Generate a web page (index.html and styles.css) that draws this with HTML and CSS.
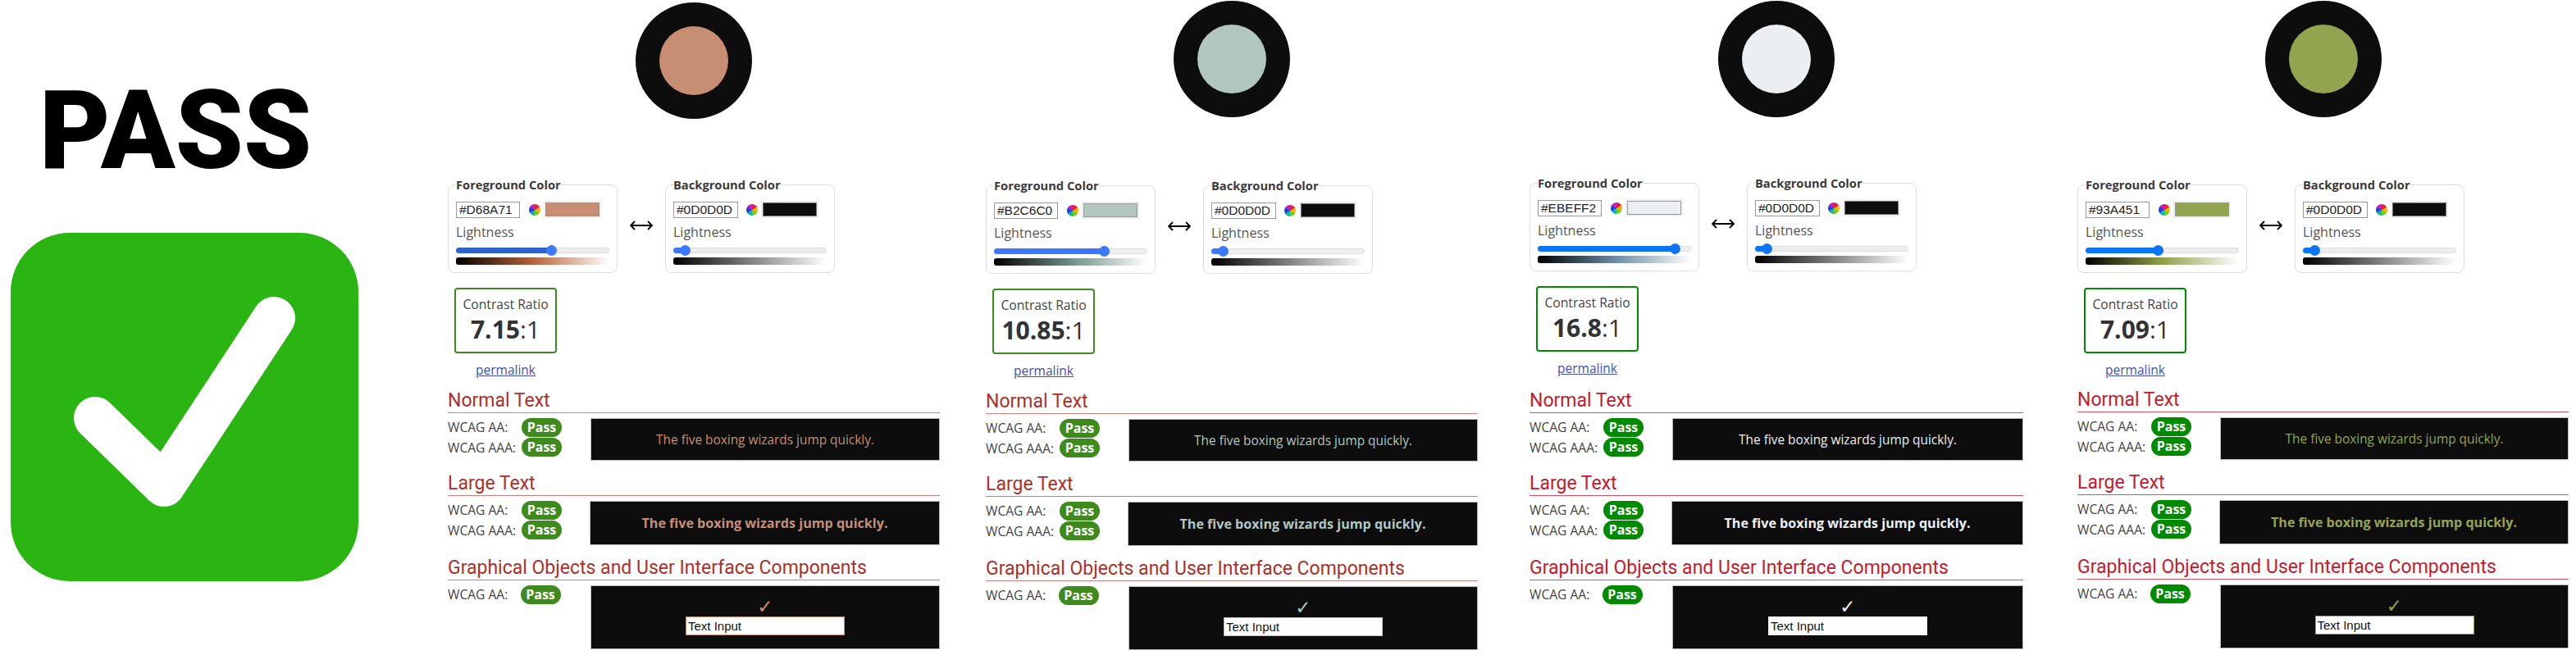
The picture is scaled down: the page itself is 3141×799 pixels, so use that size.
FILE: index.html
```html
<!DOCTYPE html>
<html lang="en">
<head>
    <meta charset="UTF-8">
    <title>Contrast checks</title>
    <link rel="stylesheet" href="styles.css">
</head>
<body>
    <aside class="verdict">
        <div class="verdict-word">PASS</div>
        <svg class="verdict-icon" viewBox="0 0 424 425" aria-hidden="true">
            <rect width="424" height="425" rx="72" fill="#2ab513"/>
            <path d="M103 226 L187 308 L321 104" fill="none" stroke="#fff" stroke-width="52" stroke-linecap="round" stroke-linejoin="round"/>
        </svg>
    </aside>

    <section class="sample sample-copper">
        <div class="disc"><div class="disc-inner"></div></div>
        <div class="controls">
            <fieldset class="picker picker-fg">
                <legend>Foreground Color</legend>
                <div class="picker-row">
                    <input class="hex" type="text" value="#D68A71">
                    <span class="wheel"></span>
                    <span class="swatch"><span class="swatch-fill"></span></span>
                </div>
                <div class="picker-label">Lightness</div>
                <div class="slider"><div class="slider-fill" style="width:63%"></div></div>
                <div class="ramp"></div>
            </fieldset>
            <svg class="swap" viewBox="0 0 28 12" aria-hidden="true"><path d="M1 6 H27 M6 1 L1 6 L6 11 M22 1 L27 6 L22 11"/></svg>
            <fieldset class="picker picker-bg">
                <legend>Background Color</legend>
                <div class="picker-row">
                    <input class="hex" type="text" value="#0D0D0D">
                    <span class="wheel"></span>
                    <span class="swatch"><span class="swatch-fill"></span></span>
                </div>
                <div class="picker-label">Lightness</div>
                <div class="slider"><div class="slider-fill" style="width:8%"></div></div>
                <div class="ramp"></div>
            </fieldset>
        </div>
        <div class="ratio">
            <div class="ratio-box">
                <div class="ratio-label">Contrast Ratio</div>
                <div class="ratio-value"><b>7.15</b>:1</div>
            </div>
            <a class="permalink" href="#">permalink</a>
        </div>
        <h3>Normal Text</h3>
        <div class="result">
            <div class="checks">
                <div class="check"><span>WCAG AA:</span><span class="pill">Pass</span></div>
                <div class="check"><span>WCAG AAA:</span><span class="pill">Pass</span></div>
            </div>
            <div class="preview preview-normal">The five boxing wizards jump quickly.</div>
        </div>
        <h3>Large Text</h3>
        <div class="result">
            <div class="checks">
                <div class="check"><span>WCAG AA:</span><span class="pill">Pass</span></div>
                <div class="check"><span>WCAG AAA:</span><span class="pill">Pass</span></div>
            </div>
            <div class="preview preview-large">The five boxing wizards jump quickly.</div>
        </div>
        <h3>Graphical Objects and User Interface Components</h3>
        <div class="result">
            <div class="checks">
                <div class="check check-ui"><span>WCAG AA:</span><span class="pill">Pass</span></div>
            </div>
            <div class="preview preview-ui">
                <span class="tick">✓</span>
                <input class="demo-input" type="text" value="Text Input">
            </div>
        </div>
    </section>

    <section class="sample sample-sage">
        <div class="disc"><div class="disc-inner"></div></div>
        <div class="controls">
            <fieldset class="picker picker-fg">
                <legend>Foreground Color</legend>
                <div class="picker-row">
                    <input class="hex" type="text" value="#B2C6C0">
                    <span class="wheel"></span>
                    <span class="swatch"><span class="swatch-fill"></span></span>
                </div>
                <div class="picker-label">Lightness</div>
                <div class="slider"><div class="slider-fill" style="width:73%"></div></div>
                <div class="ramp"></div>
            </fieldset>
            <svg class="swap" viewBox="0 0 28 12" aria-hidden="true"><path d="M1 6 H27 M6 1 L1 6 L6 11 M22 1 L27 6 L22 11"/></svg>
            <fieldset class="picker picker-bg">
                <legend>Background Color</legend>
                <div class="picker-row">
                    <input class="hex" type="text" value="#0D0D0D">
                    <span class="wheel"></span>
                    <span class="swatch"><span class="swatch-fill"></span></span>
                </div>
                <div class="picker-label">Lightness</div>
                <div class="slider"><div class="slider-fill" style="width:8%"></div></div>
                <div class="ramp"></div>
            </fieldset>
        </div>
        <div class="ratio">
            <div class="ratio-box">
                <div class="ratio-label">Contrast Ratio</div>
                <div class="ratio-value"><b>10.85</b>:1</div>
            </div>
            <a class="permalink" href="#">permalink</a>
        </div>
        <h3>Normal Text</h3>
        <div class="result">
            <div class="checks">
                <div class="check"><span>WCAG AA:</span><span class="pill">Pass</span></div>
                <div class="check"><span>WCAG AAA:</span><span class="pill">Pass</span></div>
            </div>
            <div class="preview preview-normal">The five boxing wizards jump quickly.</div>
        </div>
        <h3>Large Text</h3>
        <div class="result">
            <div class="checks">
                <div class="check"><span>WCAG AA:</span><span class="pill">Pass</span></div>
                <div class="check"><span>WCAG AAA:</span><span class="pill">Pass</span></div>
            </div>
            <div class="preview preview-large">The five boxing wizards jump quickly.</div>
        </div>
        <h3>Graphical Objects and User Interface Components</h3>
        <div class="result">
            <div class="checks">
                <div class="check check-ui"><span>WCAG AA:</span><span class="pill">Pass</span></div>
            </div>
            <div class="preview preview-ui">
                <span class="tick">✓</span>
                <input class="demo-input" type="text" value="Text Input">
            </div>
        </div>
    </section>

    <section class="sample sample-mist">
        <div class="disc"><div class="disc-inner"></div></div>
        <div class="controls">
            <fieldset class="picker picker-fg">
                <legend>Foreground Color</legend>
                <div class="picker-row">
                    <input class="hex" type="text" value="#EBEFF2">
                    <span class="wheel"></span>
                    <span class="swatch"><span class="swatch-fill"></span></span>
                </div>
                <div class="picker-label">Lightness</div>
                <div class="slider"><div class="slider-fill" style="width:91%"></div></div>
                <div class="ramp"></div>
            </fieldset>
            <svg class="swap" viewBox="0 0 28 12" aria-hidden="true"><path d="M1 6 H27 M6 1 L1 6 L6 11 M22 1 L27 6 L22 11"/></svg>
            <fieldset class="picker picker-bg">
                <legend>Background Color</legend>
                <div class="picker-row">
                    <input class="hex" type="text" value="#0D0D0D">
                    <span class="wheel"></span>
                    <span class="swatch"><span class="swatch-fill"></span></span>
                </div>
                <div class="picker-label">Lightness</div>
                <div class="slider"><div class="slider-fill" style="width:8%"></div></div>
                <div class="ramp"></div>
            </fieldset>
        </div>
        <div class="ratio">
            <div class="ratio-box">
                <div class="ratio-label">Contrast Ratio</div>
                <div class="ratio-value"><b>16.8</b>:1</div>
            </div>
            <a class="permalink" href="#">permalink</a>
        </div>
        <h3>Normal Text</h3>
        <div class="result">
            <div class="checks">
                <div class="check"><span>WCAG AA:</span><span class="pill">Pass</span></div>
                <div class="check"><span>WCAG AAA:</span><span class="pill">Pass</span></div>
            </div>
            <div class="preview preview-normal">The five boxing wizards jump quickly.</div>
        </div>
        <h3>Large Text</h3>
        <div class="result">
            <div class="checks">
                <div class="check"><span>WCAG AA:</span><span class="pill">Pass</span></div>
                <div class="check"><span>WCAG AAA:</span><span class="pill">Pass</span></div>
            </div>
            <div class="preview preview-large">The five boxing wizards jump quickly.</div>
        </div>
        <h3>Graphical Objects and User Interface Components</h3>
        <div class="result">
            <div class="checks">
                <div class="check check-ui"><span>WCAG AA:</span><span class="pill">Pass</span></div>
            </div>
            <div class="preview preview-ui">
                <span class="tick">✓</span>
                <input class="demo-input" type="text" value="Text Input">
            </div>
        </div>
    </section>

    <section class="sample sample-olive">
        <div class="disc"><div class="disc-inner"></div></div>
        <div class="controls">
            <fieldset class="picker picker-fg">
                <legend>Foreground Color</legend>
                <div class="picker-row">
                    <input class="hex" type="text" value="#93A451">
                    <span class="wheel"></span>
                    <span class="swatch"><span class="swatch-fill"></span></span>
                </div>
                <div class="picker-label">Lightness</div>
                <div class="slider"><div class="slider-fill" style="width:48%"></div></div>
                <div class="ramp"></div>
            </fieldset>
            <svg class="swap" viewBox="0 0 28 12" aria-hidden="true"><path d="M1 6 H27 M6 1 L1 6 L6 11 M22 1 L27 6 L22 11"/></svg>
            <fieldset class="picker picker-bg">
                <legend>Background Color</legend>
                <div class="picker-row">
                    <input class="hex" type="text" value="#0D0D0D">
                    <span class="wheel"></span>
                    <span class="swatch"><span class="swatch-fill"></span></span>
                </div>
                <div class="picker-label">Lightness</div>
                <div class="slider"><div class="slider-fill" style="width:8%"></div></div>
                <div class="ramp"></div>
            </fieldset>
        </div>
        <div class="ratio">
            <div class="ratio-box">
                <div class="ratio-label">Contrast Ratio</div>
                <div class="ratio-value"><b>7.09</b>:1</div>
            </div>
            <a class="permalink" href="#">permalink</a>
        </div>
        <h3>Normal Text</h3>
        <div class="result">
            <div class="checks">
                <div class="check"><span>WCAG AA:</span><span class="pill">Pass</span></div>
                <div class="check"><span>WCAG AAA:</span><span class="pill">Pass</span></div>
            </div>
            <div class="preview preview-normal">The five boxing wizards jump quickly.</div>
        </div>
        <h3>Large Text</h3>
        <div class="result">
            <div class="checks">
                <div class="check"><span>WCAG AA:</span><span class="pill">Pass</span></div>
                <div class="check"><span>WCAG AAA:</span><span class="pill">Pass</span></div>
            </div>
            <div class="preview preview-large">The five boxing wizards jump quickly.</div>
        </div>
        <h3>Graphical Objects and User Interface Components</h3>
        <div class="result">
            <div class="checks">
                <div class="check check-ui"><span>WCAG AA:</span><span class="pill">Pass</span></div>
            </div>
            <div class="preview preview-ui">
                <span class="tick">✓</span>
                <input class="demo-input" type="text" value="Text Input">
            </div>
        </div>
    </section>
</body>
</html>
```

FILE: styles.css
```css
* {
    box-sizing: border-box;
}

body {
    margin: 0;
    width: 3141px;
    height: 799px;
    overflow: hidden;
    display: flex;
    align-items: flex-start;
    background-color: #fff;
    font-family: "Open Sans", sans-serif;
    color: #444;
}

/* left column: big word and green tick */
.verdict {
    width: 437px;
    margin-left: 13px;
    flex: none;
    padding-top: 94px;
}

.verdict-word {
    margin-left: 35px;
    height: 190px;
    font-family: Roboto, sans-serif;
    font-weight: 900;
    font-size: 133px;
    line-height: 132px;
    color: #000;
}

.verdict-icon {
    display: block;
    width: 424px;
    height: 425px;
}

/* one block per checked colour */
.sample {
    --ink: #c88e73;
    --mid: #b5623c;
    --head: #ae2f28;
    --rule: #d0807a;
    --ok: #3f8a1c;
    --bar: #3b78ff;
    --knob: #3b78ff;
    --top: 0px;
    --results: 0px;
    flex: none;
    width: 600px;
    margin-left: 96px;
}

.sample-copper {
    --bar: #2f62cc;
    --disc-top: 3px;
}

.sample-sage {
    --ink: #b2c6c0;
    --mid: #6f8f86;
    --top: 1px;
    --results: 0px;
    margin-left: 56px;
}

.sample-mist {
    --ink: #ebeff2;
    --mid: #6b8aa5;
    --head: #c8192b;
    --rule: #d9505c;
    --ok: #008a00;
    --bar: #0a75f5;
    --knob: #0a75f5;
    --top: -2px;
    --results: 2px;
    margin-left: 63px;
    width: 602px;
}

.sample-olive {
    --ink: #93a451;
    --mid: #8ea04a;
    --head: #c8192b;
    --rule: #d9505c;
    --ok: #008a00;
    --bar: #0a75f5;
    --knob: #0a75f5;
    --results: -1px;
    margin-left: 66px;
    width: 599px;
}

.disc {
    width: 142px;
    height: 142px;
    margin: var(--disc-top, 1px) auto 0;
    border-radius: 50%;
    background-color: #0d0d0d;
    display: flex;
    align-items: center;
    justify-content: center;
}

.disc-inner {
    width: 84px;
    height: 84px;
    border-radius: 50%;
    background-color: var(--ink);
}

.sample-copper .controls {
    margin-top: 71px;
}

.controls {
    display: flex;
    align-items: center;
    gap: 15px;
    margin-top: calc(73px + var(--top));
}

.picker {
    width: 207px;
    margin: 0;
    padding: 11px 9px 9px;
    border: 1px solid #ddd;
    border-radius: 8px;
    min-inline-size: 0;
}

.picker legend {
    padding: 0;
    font-size: 14.7px;
    line-height: 18px;
    font-weight: 700;
    color: #3a3a3a;
}

.picker-row {
    display: flex;
    align-items: center;
    height: 21px;
}

.hex {
    width: 78px;
    height: 20px;
    margin: 0;
    padding: 0 3px;
    border: 1px solid #999;
    font-family: "Liberation Sans", sans-serif;
    font-size: 15.5px;
    color: #222;
}

.picker-bg .hex {
    width: 79px;
}

.wheel {
    width: 14px;
    height: 14px;
    margin: 0 4px 0 11px;
    border-radius: 50%;
    background: conic-gradient(#e8203a 0 60deg, #f5b400 0 120deg, #6fd01e 0 180deg, #0fb5a5 0 240deg, #2040e0 0 300deg, #c020c0 0);
}

.picker-bg .wheel {
    margin-left: 10px;
}

.swatch {
    width: 70px;
    height: 21px;
    padding: 2px;
    background-color: #f0f0f0;
}

.swatch-fill {
    display: block;
    height: 100%;
    border: 1px solid #999;
    background-color: var(--ink);
}

.picker-bg .swatch-fill {
    border-color: #777;
    background-color: #0d0d0d;
}

.picker-label {
    margin-top: 7px;
    font-size: 16px;
    line-height: 20px;
    color: #555;
}

.slider {
    position: relative;
    height: 7px;
    margin-top: 9px;
    border: 1px solid #ddd;
    border-radius: 4px;
    background-color: #eee;
}

.slider-fill {
    position: relative;
    height: 7px;
    margin: -1px 0 0 -1px;
    border-radius: 4px 0 0 4px;
    background-color: var(--bar);
}

.picker-bg .slider-fill {
    background-color: var(--knob);
}

.slider-fill::after {
    content: "";
    position: absolute;
    top: -3px;
    right: -6px;
    width: 13px;
    height: 13px;
    border-radius: 50%;
    background-color: var(--knob);
}

.ramp {
    height: 9px;
    margin-top: 5px;
    border-radius: 3px 0 0 3px;
    background: linear-gradient(to right, #000, var(--mid) 50%, #fff);
}

.picker-bg .ramp {
    background: linear-gradient(to right, #000, #808080 50%, #fff);
}

.swap {
    width: 28px;
    height: 12px;
    flex: none;
    fill: none;
    stroke: #000;
    stroke-width: 1.8;
}

.ratio {
    width: 125px;
    margin: 18px 0 0 8px;
    text-align: center;
}

.ratio-box {
    height: 80px;
    padding-top: 8px;
    border: 2px solid var(--ok);
    border-radius: 4px;
}

.ratio-label {
    font-size: 15.7px;
    line-height: 20px;
    white-space: nowrap;
}

.ratio-value {
    margin-top: 2px;
    font-size: 30px;
    line-height: 38px;
    color: #333;
}

.permalink {
    display: block;
    margin-top: 10px;
    font-size: 15.5px;
    line-height: 20px;
    color: #3f51b5;
}

h3 {
    height: 29px;
    margin: 14px 0 6px;
    border-bottom: 1px solid var(--rule);
    font-family: Roboto, sans-serif;
    font-weight: 400;
    font-size: 23px;
    line-height: 28px;
    color: var(--head);
}

.ratio + h3 {
    margin-top: calc(14px + var(--results));
}

.result {
    display: flex;
}

.checks {
    width: 174px;
    flex: none;
    margin-top: -1px;
}

.check {
    display: flex;
    align-items: center;
    height: 24.5px;
    font-size: 15.6px;
}

.check span:first-child {
    width: 90px;
}

.check-ui .pill {
    margin-left: -1.5px;
}

.pill {
    width: 49px;
    height: 23px;
    border-radius: 12px;
    background-color: var(--ok);
    color: #fff;
    font-size: 16px;
    font-weight: 700;
    line-height: 22px;
    text-align: center;
}

.preview {
    flex: 1;
    display: flex;
    align-items: center;
    justify-content: center;
    border: 1px solid #bbb;
    background-color: #0d0d0d;
    color: var(--ink);
}

.preview-normal {
    height: 52px;
    font-size: 15.4px;
}

.preview-large {
    height: 54px;
    margin-left: -1px;
    font-size: 16.1px;
    font-weight: 700;
}

.preview-ui {
    height: 78px;
    padding-top: 1px;
    flex-direction: column;
}

.tick {
    font-family: "DejaVu Sans", sans-serif;
    font-size: 23px;
    line-height: 24px;
}

.demo-input {
    width: 194px;
    height: 23px;
    margin: 0 0 4px;
    padding: 0 2px;
    border: 1px solid var(--ink);
    outline: 0;
    background-color: #fff;
    font-family: "Liberation Sans", sans-serif;
    font-size: 15px;
    color: #111;
}
```
